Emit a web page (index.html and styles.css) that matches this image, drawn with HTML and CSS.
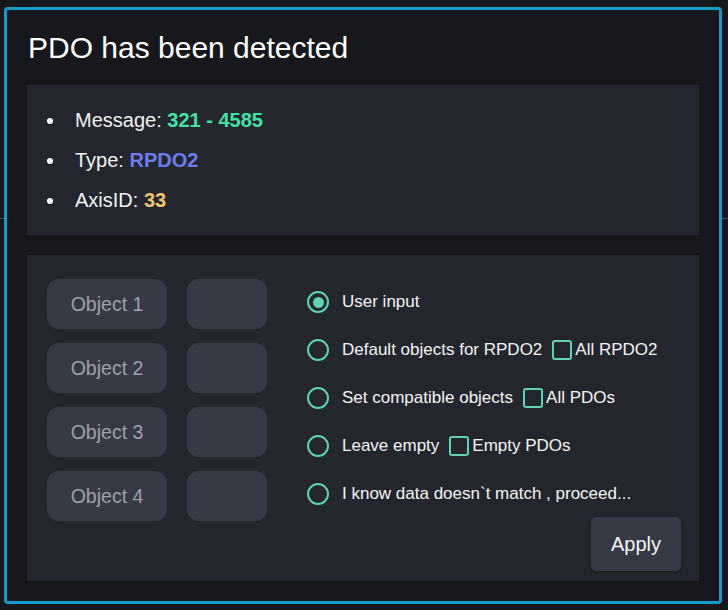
FILE: index.html
```html
<!DOCTYPE html>
<html lang="en">
<head>
<meta charset="utf-8">
<title>PDO has been detected</title>
<link rel="stylesheet" href="styles.css">
</head>
<body>
<div class="backline"></div>
<div class="dialog">
  <h1 class="title">PDO has been detected</h1>
  <div class="info">
    <ul class="info-list">
      <li>Message: <b class="v-green">321 - 4585</b></li>
      <li>Type: <b class="v-blue">RPDO2</b></li>
      <li>AxisID: <b class="v-yellow">33</b></li>
    </ul>
  </div>
  <div class="config">
    <div class="objects">
      <div class="obj-name">Object 1</div><div class="obj-val"></div>
      <div class="obj-name">Object 2</div><div class="obj-val"></div>
      <div class="obj-name">Object 3</div><div class="obj-val"></div>
      <div class="obj-name">Object 4</div><div class="obj-val"></div>
    </div>
    <div class="options">
      <div class="opt"><span class="radio checked"></span><span>User input</span></div>
      <div class="opt"><span class="radio"></span><span>Default objects for RPDO2</span><span class="check"></span><span class="check-label">All RPDO2</span></div>
      <div class="opt"><span class="radio"></span><span>Set compatible objects</span><span class="check"></span><span class="check-label">All PDOs</span></div>
      <div class="opt"><span class="radio"></span><span>Leave empty</span><span class="check"></span><span class="check-label">Empty PDOs</span></div>
      <div class="opt"><span class="radio"></span><span>I know data doesn`t match , proceed...</span></div>
      <button class="apply">Apply</button>
    </div>
  </div>
</div>
</body>
</html>
```
FILE: styles.css
```css
* { box-sizing: border-box; }
html, body {
  margin: 0;
  padding: 0;
  background: #16171b;
  font-family: "Liberation Sans", Arial, sans-serif;
  color: #f2f2f2;
}
body { position: relative; width: 728px; height: 610px; overflow: hidden; }
.backline {
  position: absolute;
  left: 0;
  right: 0;
  top: 218px;
  height: 1px;
  background: #36595a;
}
.dialog {
  position: relative;
  margin: 7px 0 0 4px;
  width: 718px;
  height: 597px;
  border: 3px solid #129bc9;
  border-radius: 4px;
  background: #17181d;
  padding: 0 20px 20px 20px;
}
.title {
  margin: 0;
  height: 75px;
  line-height: 75px;
  font-size: 30px;
  font-weight: normal;
  padding-left: 1px;
  color: #ffffff;
}
.info {
  background: #23262e;
  height: 150px;
  padding: 15px 0 15px 20px;
}
.info-list {
  margin: 0;
  padding: 0;
  list-style: none;
  font-size: 20px;
  line-height: 40px;
}
.info-list li::before {
  content: "";
  display: inline-block;
  width: 6px;
  height: 6px;
  border-radius: 50%;
  background: #ffffff;
  margin-right: 22px;
  vertical-align: 3px;
}
.v-green { color: #40e4a3; }
.v-blue { color: #6b7ef0; }
.v-yellow { color: #f0c86b; }
.config {
  margin-top: 20px;
  background: #23262e;
  height: 326px;
  padding: 23px 18px 10px 20px;
  display: flex;
  gap: 40px;
}
.objects {
  margin-top: 1px;
  display: grid;
  grid-template-columns: 120px 80px;
  grid-auto-rows: 50px;
  column-gap: 20px;
  row-gap: 14px;
  align-content: start;
}
.obj-name, .obj-val {
  background: #353a46;
  border-radius: 12px;
}
.obj-name {
  display: flex;
  align-items: center;
  justify-content: center;
  color: #9ba1ad;
  font-size: 19.5px;
}
.options {
  flex: 1;
  display: flex;
  flex-direction: column;
}
.opt {
  height: 48px;
  display: flex;
  align-items: center;
  font-size: 17px;
  color: #f4f4f4;
}
.radio {
  width: 22px;
  height: 22px;
  border: 2px solid #5ed2b4;
  border-radius: 50%;
  margin-right: 13px;
  flex: none;
  display: flex;
  align-items: center;
  justify-content: center;
}
.radio.checked::after {
  content: "";
  width: 11px;
  height: 11px;
  border-radius: 50%;
  background: #5ed2b4;
}
.check {
  width: 20px;
  height: 20px;
  border: 2px solid #5ed2b4;
  border-radius: 3px;
  margin-left: 10px;
  margin-right: 3px;
  flex: none;
}
.apply {
  align-self: flex-end;
  margin-top: -1px;
  width: 90px;
  height: 54px;
  flex: none;
  border: none;
  border-radius: 5px;
  background: #343945;
  color: #f4f4f4;
  font-family: "Liberation Sans", Arial, sans-serif;
  font-size: 20px;
  box-shadow: 0 1px 3px rgba(0,0,0,0.35);
}
```
